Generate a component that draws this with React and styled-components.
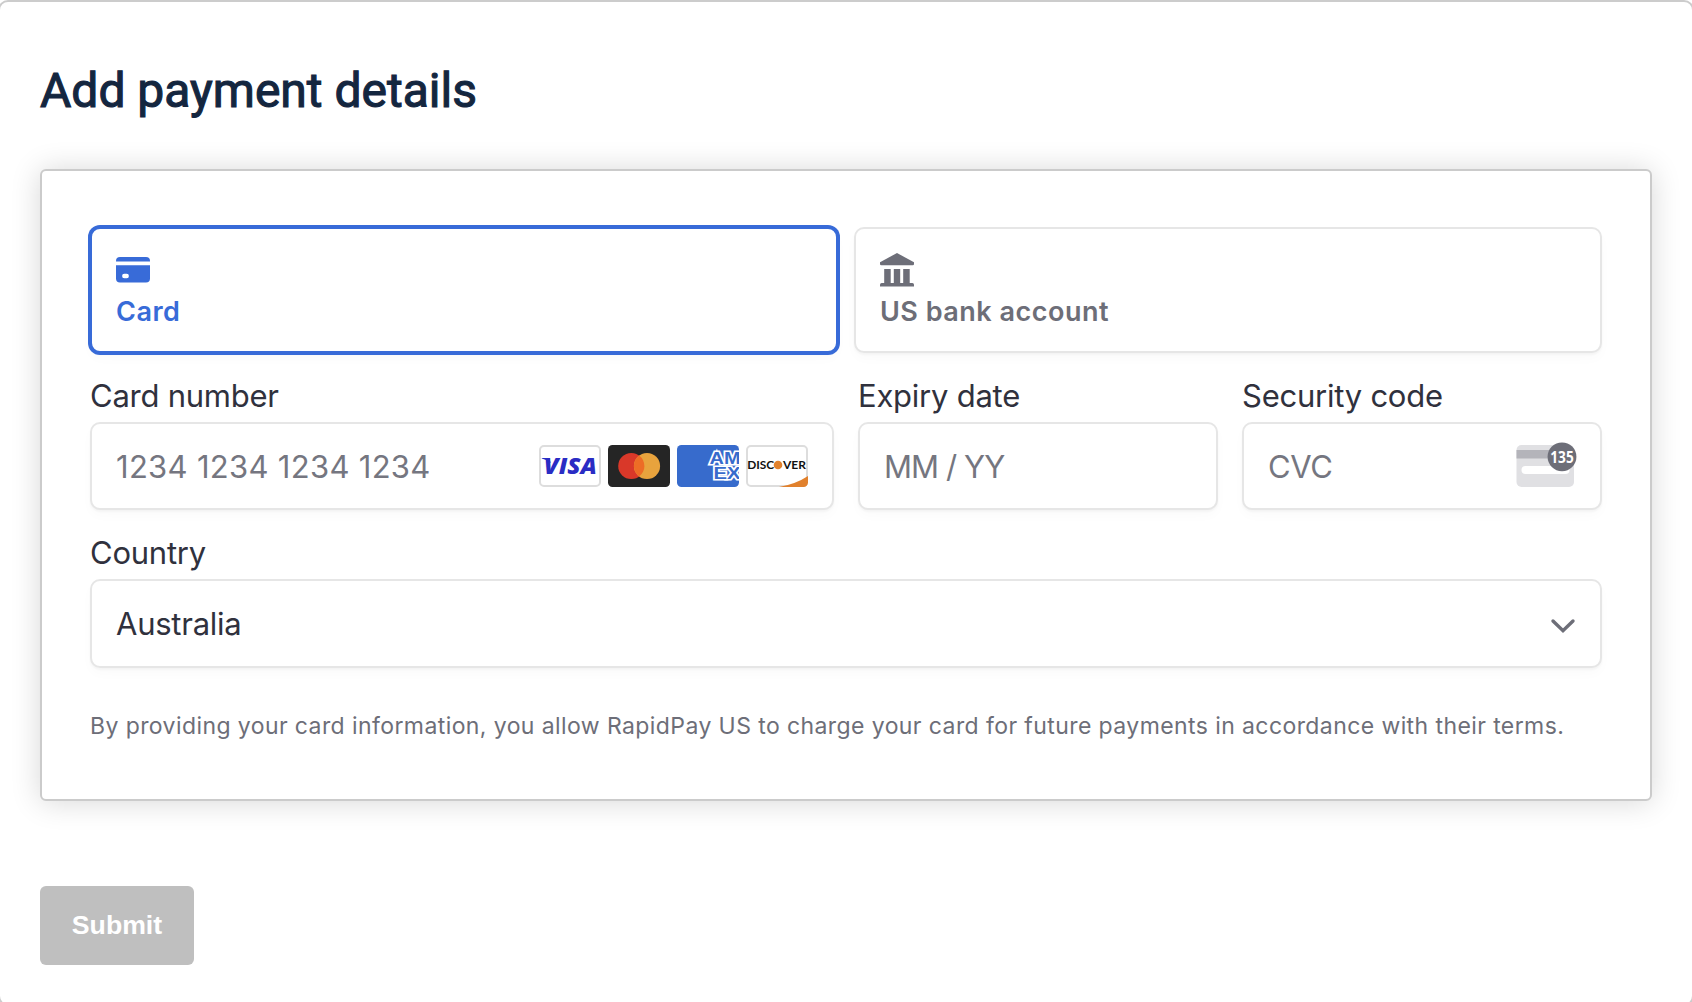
import React from "react";
import styled, { createGlobalStyle } from "styled-components";

const GlobalStyle = createGlobalStyle`
  * { box-sizing: border-box; }
  html, body { margin: 0; background: #fff; overflow: hidden; }
  body { font-family: Inter, "Liberation Sans", sans-serif; }
`;

const Frame = styled.main`
  width: 1696px;
  height: 1006px;
  margin-left: -2px;
  padding: 59px 40px 0;
  border: 2px solid #ccc;
  border-radius: 10px;
  background: #fff;
`;

const Title = styled.h1`
  margin: 0 0 48px;
  font: 400 48px/60px Roboto, sans-serif;
  -webkit-text-stroke: 1.1px #14263f;
  color: #14263f;
`;

const Panel = styled.section`
  height: 632px;
  padding: 56px 48px;
  border: 2px solid #cbcbcb;
  border-radius: 6px;
  box-shadow: 0 1px 30px rgba(0, 0, 0, 0.16);
  background: #fff;
`;

const Tabs = styled.div`
  display: grid;
  grid-template-columns: 1fr 1fr;
  gap: 16px;
  margin-bottom: 25px;
`;

const Tab = styled.button`
  display: flex;
  flex-direction: column;
  align-items: flex-start;
  height: 126px;
  padding: 24px;
  text-align: left;
  background: #fff;
  color: ${(p) => (p.$active ? "#386bd8" : "#6d6e78")};
  border: 2px solid ${(p) => (p.$active ? "#386bd8" : "#e6e6e6")};
  border-radius: 10px;
  box-shadow: ${(p) => (p.$active ? "0 0 0 2px #386bd8, " : "")}0 2px 2px rgba(0, 0, 0, 0.03), 0 6px 12px rgba(0, 0, 0, 0.02);
`;

const TabIcon = styled.svg`
  display: block;
  flex: none;
  width: 34px;
  height: 34px;
  fill: currentColor;
`;

const TabLabel = styled.span`
  margin-top: 9px;
  font: 600 27px/32px Inter, sans-serif;
  white-space: nowrap;
  letter-spacing: 0.5px;
`;

const Fields = styled.div`
  display: grid;
  grid-template-columns: 744px 360px 360px;
  column-gap: 24px;
  row-gap: 25px;
`;

const Field = styled.label`
  display: flex;
  flex-direction: column;
  gap: 8px;
  grid-column: ${(p) => (p.$wide ? "1 / -1" : "auto")};
`;

const Caption = styled.span`
  font: 400 31px/36px Inter, sans-serif;
  color: #30313d;
  white-space: nowrap;
  letter-spacing: -0.24px;
`;

const Control = styled.div`
  display: flex;
  align-items: center;
  justify-content: space-between;
  height: ${(p) => p.$height || 88}px;
  padding: 0 24px;
  border: 2px solid #e6e6e6;
  border-radius: 10px;
  background: #fff;
  box-shadow: 0 2px 2px rgba(0, 0, 0, 0.03), 0 6px 12px rgba(0, 0, 0, 0.02);
`;

const Value = styled.span`
  margin-top: ${(p) => (p.$filled ? 0 : 2)}px;
  font: 400 31px/40px Inter, sans-serif;
  color: ${(p) => (p.$filled ? "#30313d" : "#757680")};
  white-space: nowrap;
  letter-spacing: ${(p) => p.$spacing || "0"};
`;

const Brands = styled.div`
  display: flex;
  gap: 7px;
`;

const BrandIcon = styled.svg`
  display: block;
  width: 62px;
  height: 42px;
`;

const CvcIcon = styled.svg`
  display: block;
  width: 60px;
  height: 46px;
  margin-bottom: 2px;
  overflow: visible;
`;

const Chevron = styled.svg`
  display: block;
  width: 24px;
  height: 14px;
  margin: 4px 1px 0 0;
  overflow: visible;
`;

const Terms = styled.p`
  margin: 42px 0 0;
  font: 400 23px/32px Inter, sans-serif;
  letter-spacing: 0.41px;
  color: #6d6e78;
  white-space: nowrap;
`;

const Submit = styled.button`
  display: block;
  width: 154px;
  height: 79px;
  margin-top: 85px;
  padding: 0 0 2px;
  border: 0;
  border-radius: 6px;
  background: #bfbfbf;
  color: #fff;
  font: 700 26.67px/32px "Liberation Sans", Arial, sans-serif;
`;

function Visa() {
  return (
    <BrandIcon viewBox="0 0 62 42">
      <rect x="1" y="1" width="60" height="40" rx="4" fill="#fff" stroke="#ddd" strokeWidth="2" />
      <text x="4.8" y="29" textLength="53" lengthAdjust="spacingAndGlyphs" fontFamily="Open Sans" fontSize="22.5" fontWeight="800" fontStyle="italic" fill="#2a2cc4">VISA</text>
      <path d="M2.8 13h7.4l1.5 5q-3.5-3.2-8.9-4.4z" fill="#2a2cc4" />
    </BrandIcon>
  );
}

function Mastercard() {
  return (
    <BrandIcon viewBox="0 0 62 42">
      <rect width="62" height="42" rx="4.5" fill="#252525" />
      <circle cx="23.3" cy="21" r="13.1" fill="#d93829" />
      <circle cx="39" cy="21" r="13.1" fill="#e8a33d" />
      <path d="M31.15 10.5a13.1 13.1 0 0 1 0 21a13.1 13.1 0 0 1 0-21z" fill="#ed6c26" />
    </BrandIcon>
  );
}

function Amex() {
  return (
    <BrandIcon viewBox="0 0 62 42">
      <clipPath id="amex-card"><rect width="62" height="42" rx="4.5" /></clipPath>
      <g clipPath="url(#amex-card)">
        <rect width="62" height="42" fill="#376bcc" />
        <g fontFamily="Liberation Sans" fontSize="16" fontWeight="700" fill="#376bcc" stroke="#fff" strokeWidth="3" paintOrder="stroke">
          <text x="32.5" y="19.3" textLength="31" lengthAdjust="spacingAndGlyphs">AM</text>
          <text x="36.4" y="33.6" textLength="27" lengthAdjust="spacingAndGlyphs">EX</text>
        </g>
      </g>
    </BrandIcon>
  );
}

function Discover() {
  return (
    <BrandIcon viewBox="0 0 62 42">
      <clipPath id="discover-card"><rect width="62" height="42" rx="4.5" /></clipPath>
      <rect x="1" y="1" width="60" height="40" rx="4" fill="#fff" stroke="#ddd" strokeWidth="2" />
      <path d="M62 31Q50 39 33 42H62z" fill="#e1812d" clipPath="url(#discover-card)" />
      <g fontFamily="Lato" fontSize="12" fontWeight="700" fill="#111">
        <text x="1.2" y="24.2" textLength="27" lengthAdjust="spacingAndGlyphs">DISC</text>
        <text x="37" y="24.2" textLength="23" lengthAdjust="spacingAndGlyphs">VER</text>
      </g>
      <circle cx="32" cy="20" r="4.3" fill="#e1812d" />
    </BrandIcon>
  );
}

function CvcCard() {
  return (
    <CvcIcon viewBox="0 0 60 46">
      <rect x="0.5" y="3" width="57.5" height="42" rx="5" fill="#e0e0e3" />
      <path d="M0.5 8h57.5v8.5H0.5z" fill="#b4b4ba" />
      <rect x="5.5" y="24" width="48" height="8" rx="4" fill="#fff" />
      <circle cx="46" cy="14.8" r="14.4" fill="#6d6e78" />
      <text x="34.3" y="20.9" textLength="23.4" lengthAdjust="spacingAndGlyphs" fontFamily="Noto Sans" fontSize="16.5" fontWeight="700" fill="#fff">135</text>
    </CvcIcon>
  );
}

export default function App() {
  return (
    <>
      <GlobalStyle />
      <Frame>
        <Title>Add payment details</Title>
        <Panel>
          <Tabs>
            <Tab $active>
              <TabIcon viewBox="0 0 34 34">
                <path d="M0 8.5V8a4 4 0 0 1 4-4h26a4 4 0 0 1 4 4v.5z" />
                <path fillRule="evenodd" d="M0 12.2h34V25.6a4 4 0 0 1-4 4H4a4 4 0 0 1-4-4zM8.3 20.8a2.2 2.2 0 0 0 0 4.4h2.4a2.2 2.2 0 0 0 0-4.4z" />
              </TabIcon>
              <TabLabel>Card</TabLabel>
            </Tab>
            <Tab>
              <TabIcon viewBox="0 0 34 34">
                <path d="M17 0L34 9.3V11a1.3 1.3 0 0 1-1.3 1.3H1.3A1.3 1.3 0 0 1 0 11V9.3z" />
                <path d="M4.2 16h6.5v14h3.1V16h6.4v14h3V16h6.5v14h2.6a1.7 1.7 0 0 1 1.7 1.7V33.6H0v-1.9A1.7 1.7 0 0 1 1.7 30h2.5z" />
              </TabIcon>
              <TabLabel>US bank account</TabLabel>
            </Tab>
          </Tabs>
          <Fields>
            <Field>
              <Caption>Card number</Caption>
              <Control>
                <Value $spacing="0.3px">1234 1234 1234 1234</Value>
                <Brands><Visa /><Mastercard /><Amex /><Discover /></Brands>
              </Control>
            </Field>
            <Field>
              <Caption>Expiry date</Caption>
              <Control><Value $spacing="-0.9px">MM / YY</Value></Control>
            </Field>
            <Field>
              <Caption>Security code</Caption>
              <Control><Value $spacing="-0.4px">CVC</Value><CvcCard /></Control>
            </Field>
            <Field $wide>
              <Caption>Country</Caption>
              <Control $height={89}>
                <Value $filled $spacing="-0.25px">Australia</Value>
                <Chevron viewBox="0 0 24 14">
                  <path d="M2 2l10 9.7L22 2" fill="none" stroke="#6d6e78" strokeWidth="3.4" strokeLinecap="round" />
                </Chevron>
              </Control>
            </Field>
          </Fields>
          <Terms>By providing your card information, you allow RapidPay US to charge your card for future payments in accordance with their terms.</Terms>
        </Panel>
        <Submit>Submit</Submit>
      </Frame>
    </>
  );
}
